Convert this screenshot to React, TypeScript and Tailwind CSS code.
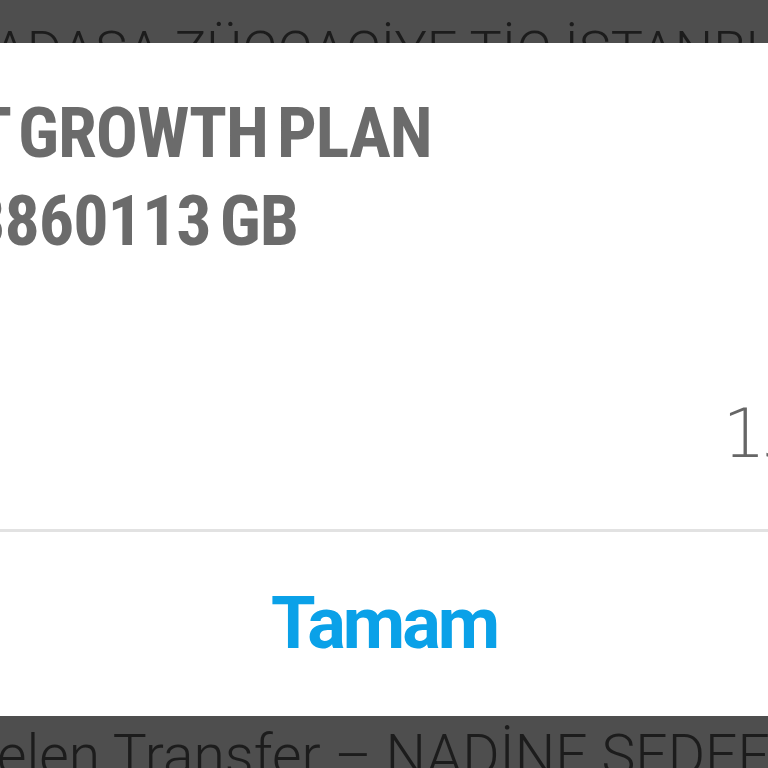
const cond = { fontFamily: '"Roboto Condensed", "Liberation Sans Narrow", Roboto, sans-serif' };
const list = { fontFamily: 'Roboto, "Open Sans", sans-serif' };

export default function App() {
  return (
    <div className="flex h-[768px] w-[768px] flex-col overflow-hidden bg-[#4e4e4e]">
      <div className="h-[43px] shrink-0 overflow-hidden bg-[#4e4e4e]">
        <p
          className="-ml-[7px] mt-[24px] whitespace-nowrap text-[54px] font-light leading-none text-[#1c1c1c]"
          style={list}
        >
          ADASA ZÜCCACİYE TİC İSTANBUL
        </p>
      </div>

      <div className="flex h-[673px] shrink-0 flex-col bg-white">
        <div className="flex h-[486px] flex-col">
          <div
            className="mt-[50px] flex flex-col gap-[8px] font-bold tracking-[-1px] text-[#6b6b6b] [word-spacing:-6px]"
            style={cond}
          >
            <p className="-ml-[60px] whitespace-nowrap text-[70px] leading-[80px]">ET GROWTH PLAN</p>
            <p className="-ml-[30px] whitespace-nowrap text-[70px] leading-[80px]">3860113 GB</p>
          </div>
          <div className="mt-auto mb-[61px] flex justify-end">
            <p
              className="-mr-[29px] whitespace-nowrap text-[68px] font-extralight leading-none tracking-[-6px] text-[#666]"
              style={{ fontFamily: '"DejaVu Sans", sans-serif' }}
            >
              15
            </p>
          </div>
        </div>
        <div className="h-[3px] bg-[#e2e2e2]" />
        <div className="flex flex-1 items-center justify-center">
          <span
            className="text-[72px] font-bold leading-none tracking-[-3px] text-[#0aa1e8]"
            style={{ fontFamily: 'Roboto, sans-serif' }}
          >
            Tamam
          </span>
        </div>
      </div>

      <div className="h-[52px] shrink-0 overflow-hidden bg-[#4e4e4e]">
        <p
          className="-ml-[3px] mt-[11px] whitespace-nowrap text-[57px] font-light leading-none text-[#1c1c1c]"
          style={list}
        >
          elen Transfer – NADİNE SEDEF
        </p>
      </div>
    </div>
  );
}
